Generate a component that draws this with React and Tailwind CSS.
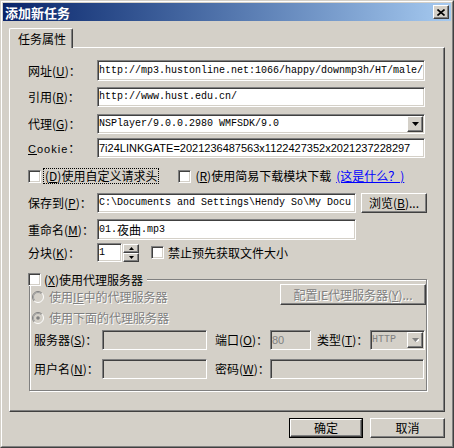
import React from 'react';

const mono = "font-['Liberation_Mono',monospace] text-[10px] leading-none whitespace-pre";
const dim = 'text-[#808080] [text-shadow:1px_1px_0_#fff]';

function Acc({ k }) {
  return (
    <>
      (<span className="underline underline-offset-1">{k}</span>)
    </>
  );
}

function Sunken({ className = '', disabled, children }) {
  return (
    <div
      className={`flex items-center overflow-hidden p-px border border-t-[#808080] border-l-[#808080] border-r-white border-b-white shadow-[inset_1px_1px_0_#404040,inset_-1px_-1px_0_#d4d0c8] ${
        disabled ? 'bg-[#d4d0c8]' : 'bg-white'
      } ${className}`}
    >
      {children}
    </div>
  );
}

function Btn({ className = '', children }) {
  return (
    <div
      className={`flex items-center justify-center bg-[#d4d0c8] border border-t-white border-l-white border-r-[#404040] border-b-[#404040] shadow-[inset_-1px_-1px_0_#808080] ${className}`}
    >
      {children}
    </div>
  );
}

function DropBtn({ disabled }) {
  return (
    <Btn className="ml-auto w-[16px] h-full shrink-0">
      <svg width="7" height="4" viewBox="0 0 7 4">
        {disabled && <path d="M1 1h7L4.5 5z" fill="#fff" />}
        <path d="M0 0h7L3.5 4z" fill={disabled ? '#808080' : '#000'} />
      </svg>
    </Btn>
  );
}

function Check() {
  return (
    <div className="w-[13px] h-[13px] shrink-0 bg-white border border-t-[#808080] border-l-[#808080] border-r-white border-b-white shadow-[inset_1px_1px_0_#404040,inset_-1px_-1px_0_#d4d0c8]" />
  );
}

function Radio({ checked }) {
  return (
    <svg width="12" height="12" viewBox="0 0 12 12" className="shrink-0">
      <circle cx="6" cy="6" r="5" fill="#d4d0c8" />
      <path d="M2.11 9.89A5.5 5.5 0 0 1 9.89 2.11" fill="none" stroke="#808080" />
      <path d="M9.89 2.11A5.5 5.5 0 0 1 2.11 9.89" fill="none" stroke="#fff" />
      <path d="M2.8 9.2A4.5 4.5 0 0 1 9.2 2.8" fill="none" stroke="#a0a0a0" />
      {checked && <circle cx="6" cy="6" r="1.8" fill="#808080" />}
    </svg>
  );
}

export default function App() {
  return (
    <div className="w-[454px] h-[448px] bg-[#d4d0c8] border border-t-[#d4d0c8] border-l-[#d4d0c8] border-r-[#404040] border-b-[#404040] font-['Noto_Sans_CJK_SC',sans-serif] text-[12px] text-black">
      <div className="h-full p-px flex flex-col border border-t-white border-l-white border-r-[#808080] border-b-[#808080]">
        {/* 标题栏 */}
        <div className="h-[18px] shrink-0 flex items-center justify-between pl-[2px] pr-[2px] bg-linear-to-r from-[#0a246a] to-[#a6caf0]">
          <span className="text-white font-bold text-[13px] leading-none">添加新任务</span>
          <Btn className="w-[16px] h-[14px]">
            <svg width="8" height="7" viewBox="0 0 8 7">
              <path d="M0.5 0.5L7.5 6.5M7.5 0.5L0.5 6.5" stroke="#000" strokeWidth="1.6" />
            </svg>
          </Btn>
        </div>

        {/* 选项卡 */}
        <div className="ml-[6px] mt-[7px] flex">
          <div className="relative z-10 -mb-px w-[64px] h-[20px] flex items-center pl-[8px] bg-[#d4d0c8] border-t border-l border-white border-r border-r-[#404040] rounded-t-[2px] shadow-[inset_-1px_0_0_#808080]">
            任务属性
          </div>
        </div>

        <div className="ml-[6px] w-[436px] h-[365px] shrink-0 pl-[18px] pt-[12px] border border-t-white border-l-white border-r-[#404040] border-b-[#404040] shadow-[inset_-1px_-1px_0_#808080]">
          <div className="flex items-center h-[21px]">
            <div className="w-[69px] shrink-0 whitespace-nowrap">
              网址<Acc k="U" />：
            </div>
            <Sunken className="w-[328px] h-full">
              <span className={mono}>http://mp3.hustonline.net:1066/happy/downmp3h/HT/male/</span>
            </Sunken>
          </div>

          <div className="flex items-center h-[20px] mt-[6px]">
            <div className="w-[69px] shrink-0 whitespace-nowrap">
              引用<Acc k="R" />：
            </div>
            <Sunken className="w-[328px] h-full">
              <span className={mono}>http://www.hust.edu.cn/</span>
            </Sunken>
          </div>

          <div className="flex items-center h-[20px] mt-[7px]">
            <div className="w-[69px] shrink-0 whitespace-nowrap">
              代理<Acc k="G" />：
            </div>
            <Sunken className="w-[328px] h-full">
              <span className={mono}>NSPlayer/9.0.0.2980 WMFSDK/9.0</span>
              <DropBtn />
            </Sunken>
          </div>

          <div className="flex items-center h-[20px] mt-[4px]">
            <div className="w-[69px] shrink-0 whitespace-nowrap">
              <span className="font-['Liberation_Sans',sans-serif] text-[11px] tracking-[1px]">
                <span className="underline">C</span>ookie
              </span>
              ：
            </div>
            <Sunken className="w-[328px] h-full">
              <span className="font-['Liberation_Sans',sans-serif] text-[11px] leading-none whitespace-pre">
                7i24LINKGATE=2021236487563x1122427352x2021237228297
              </span>
            </Sunken>
          </div>

          <div className="flex items-center h-[16px] mt-[10px] whitespace-nowrap">
            <Check />
            <div className="ml-[2px] px-[1px] h-[16px] flex items-center border border-dotted border-black">
              <Acc k="D" />使用自定义请求头
            </div>
            <div className="ml-[19px]">
              <Check />
            </div>
            <span className="ml-[4px]">
              <Acc k="R" />使用简易下载模块下载
            </span>
            <span className="ml-[5px] text-[#0000ff] underline">(这是什么？)</span>
          </div>

          <div className="flex items-center h-[20px] mt-[9px]">
            <div className="w-[69px] shrink-0 whitespace-nowrap">
              保存到<Acc k="P" />：
            </div>
            <Sunken className="w-[259px] h-full">
              <span className={mono}>{'C:\\Documents and Settings\\Hendy So\\My Docu'}</span>
            </Sunken>
            <Btn className="ml-[5px] w-[66px] h-[20px] whitespace-nowrap">
              浏览<Acc k="B" />...
            </Btn>
          </div>

          <div className="flex items-center h-[21px] mt-[6px]">
            <div className="w-[69px] shrink-0 whitespace-nowrap">
              重命名<Acc k="M" />：
            </div>
            <Sunken className="w-[259px] h-full">
              <span className={mono}>01.</span>
              <span className="leading-none">夜曲</span>
              <span className={mono}>.mp3</span>
            </Sunken>
          </div>

          <div className="flex items-center h-[19px] mt-[3px]">
            <div className="w-[69px] shrink-0 whitespace-nowrap">
              分块<Acc k="K" />：
            </div>
            <Sunken className="w-[25px] h-full">
              <span className={mono}>1</span>
            </Sunken>
            <div className="ml-[1px] w-[16px] h-[18px] flex flex-col">
              <Btn className="h-[9px]">
                <svg width="5" height="3" viewBox="0 0 5 3">
                  <path d="M2.5 0L5 3H0z" fill="#000" />
                </svg>
              </Btn>
              <Btn className="h-[9px]">
                <svg width="5" height="3" viewBox="0 0 5 3">
                  <path d="M0 0h5L2.5 3z" fill="#000" />
                </svg>
              </Btn>
            </div>
            <div className="ml-[12px]">
              <Check />
            </div>
            <span className="ml-[4px] whitespace-nowrap">禁止预先获取文件大小</span>
          </div>

          {/* 代理服务器分组 */}
          <div className="relative ml-[1px] mt-[17px] w-[398px] h-[112px] pl-[2px] pt-[4px] border border-[#808080] shadow-[inset_1px_1px_0_#fff,1px_1px_0_#fff]">
            <div className="absolute -top-[7px] -left-[2px] h-[13px] flex items-center bg-[#d4d0c8] pr-[4px] whitespace-nowrap">
              <Check />
              <span className="ml-[3px]">
                <Acc k="X" />使用代理服务器
              </span>
            </div>

            <div className="flex items-end justify-between h-[21px]">
              <div className={`flex items-center h-[14px] mb-[1px] gap-[5px] whitespace-nowrap ${dim}`}>
                <Radio />
                <span>
                  使用<span className="underline">IE</span>中的代理服务器
                </span>
              </div>
              <Btn className={`w-[146px] h-[21px] whitespace-nowrap ${dim}`}>
                配置IE代理服务器<Acc k="Y" />...
              </Btn>
            </div>

            <div className={`flex items-center h-[14px] mt-[6px] gap-[5px] whitespace-nowrap ${dim}`}>
              <Radio checked />
              <span>使用下面的代理服务器</span>
            </div>

            <div className="flex items-center h-[20px] mt-[5px] ml-[2px] whitespace-nowrap">
              <div className="w-[68px] shrink-0">
                服务器<Acc k="S" />：
              </div>
              <Sunken disabled className="w-[105px] h-full" />
              <div className="ml-[8px] w-[55px] shrink-0">
                端口<Acc k="O" />：
              </div>
              <Sunken disabled className="w-[41px] h-full">
                <span className="font-['Liberation_Sans',sans-serif] text-[11px] leading-none text-[#808080]">80</span>
              </Sunken>
              <div className="ml-[6px] w-[53px] shrink-0">
                类型<Acc k="T" />：
              </div>
              <Sunken disabled className="w-[55px] h-full">
                <span className={`${mono} text-[#808080]`}>HTTP</span>
                <DropBtn disabled />
              </Sunken>
            </div>

            <div className="flex items-center h-[20px] mt-[9px] ml-[2px] whitespace-nowrap">
              <div className="w-[68px] shrink-0">
                用户名<Acc k="N" />：
              </div>
              <Sunken disabled className="w-[105px] h-full" />
              <div className="ml-[8px] w-[55px] shrink-0">
                密码<Acc k="W" />：
              </div>
              <Sunken disabled className="w-[154px] h-full" />
            </div>
          </div>
        </div>

        {/* 底部按钮 */}
        <div className="mt-[6px] flex justify-end gap-[7px] pr-[6px]">
          <div className="w-[74px] h-[20px] border border-black flex">
            <Btn className="flex-1">确定</Btn>
          </div>
          <Btn className="w-[75px] h-[20px]">取消</Btn>
        </div>
      </div>
    </div>
  );
}
